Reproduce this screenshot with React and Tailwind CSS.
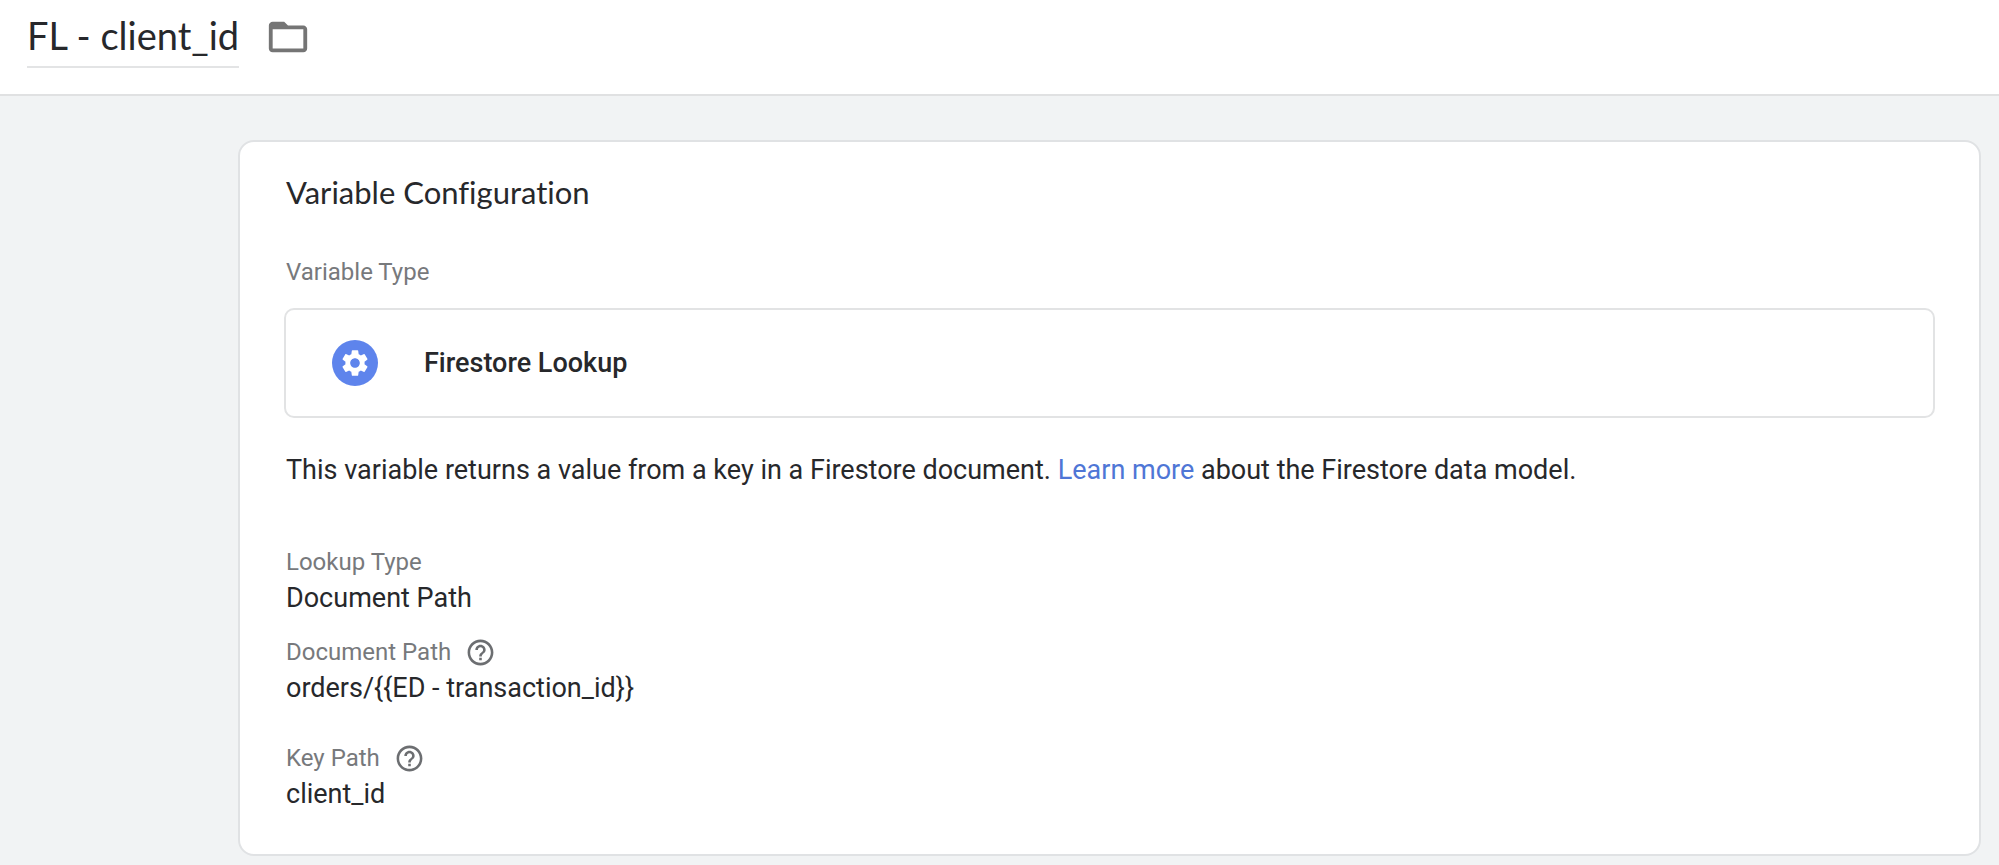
import { useState } from 'react';
import { MdFolderOpen, MdHelpOutline, MdSettings } from 'react-icons/md';

const FieldLabel = ({ children, help }) => (
  <dt className="flex items-center gap-3.5 text-2xl leading-9 text-[#77797c]">
    {children}
    {help && (
      <button type="button" aria-label={help} className="text-[#6c6e71]">
        <MdHelpOutline size={31} />
      </button>
    )}
  </dt>
);

const Field = ({ label, value, help }) => (
  <div>
    <FieldLabel help={help}>{label}</FieldLabel>
    <dd className="text-[27px] leading-9">{value}</dd>
  </div>
);

const Header = () => {
  const [name, setName] = useState('FL - client_id');

  return (
    <header className="flex items-start bg-white border-b-2 border-[#e0e1e2] px-[27px] pt-3 pb-[26px]">
      <input
        type="text"
        aria-label="Variable name"
        value={name}
        onChange={(e) => setName(e.target.value)}
        className="field-sizing-content h-14 border-b-2 border-[#e3e4e5] pb-2 font-['Lato',sans-serif] text-[38px] leading-[48px] outline-none"
      />
      <button type="button" aria-label="Move to folder" className="ml-[26px] mt-0.5 text-[#757575]">
        <MdFolderOpen size={46} />
      </button>
    </header>
  );
};

const App = () => (
  <div className="min-h-screen bg-[#f1f3f4] font-['Roboto',sans-serif] text-[#27282b]">
    <Header />

    <main className="ml-[238px] mr-[18px] mt-11 pb-2">
      <section className="rounded-2xl border-2 border-[#e0e2e4] bg-white px-[46px] pt-[30px] pb-[42px]">
        <h2 className="font-['Lato',sans-serif] text-[31px] leading-10 [font-variant-ligatures:none]">
          Variable Configuration
        </h2>

        <p className="mt-[42px] text-2xl leading-9 text-[#77797c]">Variable Type</p>
        <div className="-mx-0.5 mt-[18px]">
          <button
            type="button"
            className="flex h-[110px] w-full items-center gap-[46px] rounded-[10px] border-2 border-[#e2e3e4] px-[46px] text-left"
          >
            <span className="flex size-[46px] items-center justify-center rounded-full bg-[#5e84ec] text-white">
              <MdSettings size={32} />
            </span>
            <span className="text-[27px] leading-9 font-medium">Firestore Lookup</span>
          </button>
        </div>

        <p className="mt-[34px] text-[27px] leading-9">
          This variable returns a value from a key in a Firestore document.{' '}
          <a href="#learn-more" className="text-[#4f76d6]">Learn more</a> about the Firestore data model.
        </p>

        <dl className="mt-14">
          <Field label="Lookup Type" value="Document Path" />
          <div className="mt-[18px]">
            <Field label="Document Path" value="orders/{{ED - transaction_id}}" help="Help for Document Path" />
          </div>
          <div className="mt-[34px]">
            <Field label="Key Path" value="client_id" help="Help for Key Path" />
          </div>
        </dl>
      </section>
    </main>
  </div>
);

export default App;
